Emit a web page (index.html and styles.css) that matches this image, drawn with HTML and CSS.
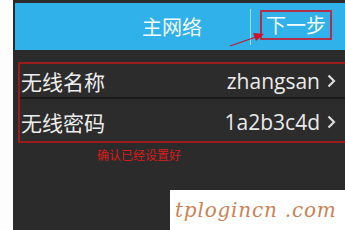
FILE: index.html
```html
<!DOCTYPE html>
<html>
<head>
<meta charset="utf-8">
<link rel="stylesheet" href="styles.css">
</head>
<body>
<div class="page">
  <div class="strip"></div>
  <div class="panel">
    <div class="header">
      <div class="title">主网络</div>
      <div class="sep"></div>
      <div class="next">下一步</div>
      <svg class="arrow" width="40" height="20" viewBox="0 0 40 20">
        <line x1="2" y1="17" x2="28" y2="8" stroke="#c0182a" stroke-width="1.2"/>
        <polygon points="36,5 25,4 28,12" fill="#d0102a"/>
      </svg>
    </div>
    <div class="list">
      <div class="row row-first">
        <span class="label">无线名称</span>
        <span class="value">zhangsan</span>
        <svg class="chev" width="9" height="14" viewBox="0 0 9 14"><polyline points="1.5,1.5 7,7 1.5,12.5" fill="none" stroke="#dcdcdc" stroke-width="2.2"/></svg>
      </div>
      <div class="row row-second">
        <span class="label">无线密码</span>
        <span class="value">1a2b3c4d</span>
        <svg class="chev" width="9" height="14" viewBox="0 0 9 14"><polyline points="1.5,1.5 7,7 1.5,12.5" fill="none" stroke="#dcdcdc" stroke-width="2.2"/></svg>
      </div>
    </div>
    <div class="note">确认已经设置好</div>
  </div>
  <div class="mark">tplogincn .com</div>
</div>
</body>
</html>
```
FILE: styles.css
```css
html, body {
  margin: 0;
  padding: 0;
  background: #ffffff;
}
.page {
  position: relative;
  display: flex;
  width: 345px;
  height: 230px;
  overflow: hidden;
  font-family: "Noto Sans", "Noto Sans CJK SC", sans-serif;
}
.strip {
  width: 13px;
  flex: none;
  background: #fdfdfd;
}
.panel {
  flex: 1;
  background: #2b2b2b;
  padding-top: 3px;
  display: flex;
  flex-direction: column;
}
.header {
  position: relative;
  margin-left: 2px;
  height: 47px;
  background: #30b1ea;
  display: flex;
  align-items: center;
}
.title {
  margin-left: 127px;
  color: #f4fbff;
  font-size: 20px;
  font-family: "Noto Sans CJK SC", sans-serif;
}
.sep {
  margin-left: 48px;
  width: 1px;
  height: 36px;
  background: #a8dcf4;
}
.next {
  margin-left: 9px;
  width: 68px;
  height: 26px;
  border: 2px solid #b0304a;
  color: #f4fbff;
  font-size: 20px;
  font-family: "Noto Sans CJK SC", sans-serif;
  display: flex;
  align-items: center;
  justify-content: center;
  line-height: 1;
  margin-top: -4px;
}
.arrow {
  position: absolute;
  left: 213px;
  top: 26px;
}
.list {
  margin-top: 12px;
  margin-left: 5px;
  margin-right: -6px;
  border: 2px solid #9c1c1c;
  display: flex;
  flex-direction: column;
}
.row {
  display: flex;
  align-items: center;
  background: #2c2c2c;
  color: #eeeeee;
}
.row-first {
  height: 33px;
}
.row-second {
  height: 38px;
  padding-top: 4px;
  border-top: 2px solid #1b1b1b;
}
.label {
  flex: 1;
  font-size: 21px;
  font-family: "Noto Sans CJK SC", sans-serif;
  margin-left: 1px;
}
.value {
  font-size: 21px;
  font-family: "Open Sans", "Noto Sans", sans-serif;
  color: #eaeaea;
}
.chev {
  margin-left: 7px;
  margin-right: 13px;
}
.note {
  margin-top: 3px;
  margin-left: 84px;
  color: #dc1a1a;
  font-size: 12px;
  font-family: "Noto Sans CJK SC", sans-serif;
}
.mark {
  position: absolute;
  left: 170px;
  top: 190px;
  width: 175px;
  height: 40px;
  background: #ffffff;
  color: #c98358;
  font-family: "DejaVu Serif", serif;
  font-style: italic;
  font-size: 20px;
  padding-left: 5px;
  box-sizing: border-box;
  line-height: 40px;
  letter-spacing: 0.8px;
}
```
